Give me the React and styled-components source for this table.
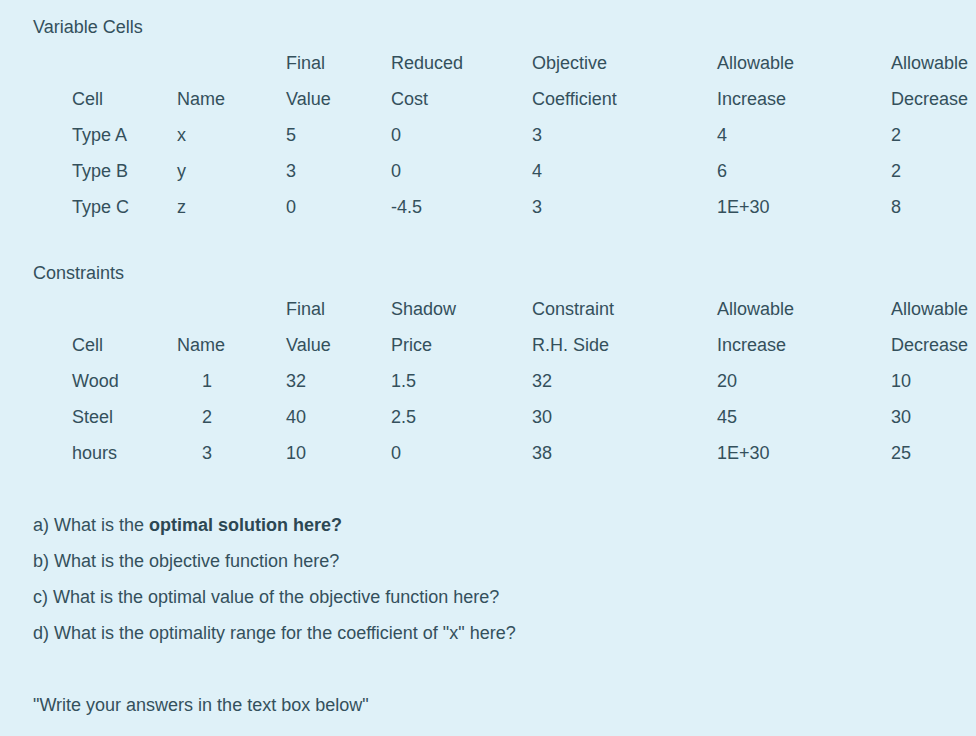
import React from "react";
import styled, { createGlobalStyle } from "styled-components";

const Global = createGlobalStyle`
  html, body {
    margin: 0;
    padding: 0;
    background: #dff1f8;
  }
  body {
    font-family: "Liberation Sans", Arial, sans-serif;
    font-size: 18px;
    color: #34505c;
  }
`;

const Page = styled.div`
  padding: 9px 0 14px 33px;
  min-height: 736px;
  box-sizing: border-box;
  background: #dff1f8;
  overflow: hidden;
`;

const Heading = styled.div`
  line-height: 36px;
  height: 36px;
  margin-top: ${(p) => (p.$spaced ? "30px" : "0")};
`;

const Table = styled.div`
  display: grid;
  grid-template-columns: 105px 109px 105px 141px 185px 174px max-content;
  margin-left: 39px;
`;

const Cell = styled.div`
  line-height: 36px;
  height: 36px;
  white-space: nowrap;
  padding-left: ${(p) => (p.$num ? "25px" : "0")};
`;

const Questions = styled.div`
  margin-top: 36px;
`;

const Line = styled.div`
  line-height: 36px;
  height: 36px;
`;

const Strong = styled.b`
  font-weight: 700;
  color: #2c4753;
`;

const Note = styled.div`
  line-height: 36px;
  margin-top: 36px;
`;

const variableRows = [
  ["", "", "Final", "Reduced", "Objective", "Allowable", "Allowable"],
  ["Cell", "Name", "Value", "Cost", "Coefficient", "Increase", "Decrease"],
  ["Type A", "x", "5", "0", "3", "4", "2"],
  ["Type B", "y", "3", "0", "4", "6", "2"],
  ["Type C", "z", "0", "-4.5", "3", "1E+30", "8"],
];

const constraintRows = [
  ["", "", "Final", "Shadow", "Constraint", "Allowable", "Allowable"],
  ["Cell", "Name", "Value", "Price", "R.H. Side", "Increase", "Decrease"],
  ["Wood", "1", "32", "1.5", "32", "20", "10"],
  ["Steel", "2", "40", "2.5", "30", "45", "30"],
  ["hours", "3", "10", "0", "38", "1E+30", "25"],
];

function Report({ rows, numericNames }) {
  return (
    <Table>
      {rows.map((row, r) =>
        row.map((val, c) => (
          <Cell key={`${r}-${c}`} $num={numericNames && c === 1 && r > 1}>
            {val}
          </Cell>
        ))
      )}
    </Table>
  );
}

export default function App() {
  return (
    <>
      <Global />
      <Page>
        <Heading>Variable Cells</Heading>
        <Report rows={variableRows} />
        <Heading $spaced>Constraints</Heading>
        <Report rows={constraintRows} numericNames />
        <Questions>
          <Line>
            a) What is the <Strong>optimal solution here?</Strong>
          </Line>
          <Line>b) What is the objective function here?</Line>
          <Line>c) What is the optimal value of the objective function here?</Line>
          <Line>d) What is the optimality range for the coefficient of "x" here?</Line>
        </Questions>
        <Note>"Write your answers in the text box below"</Note>
      </Page>
    </>
  );
}
